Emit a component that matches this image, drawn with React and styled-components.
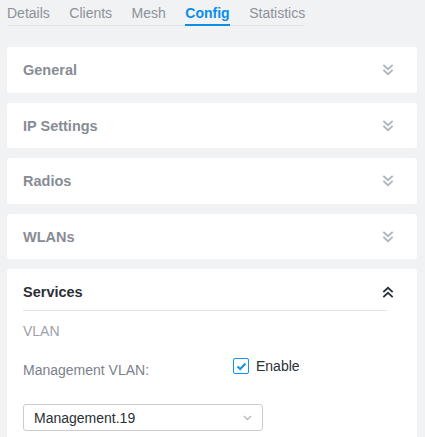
import React, { useState } from "react";
import styled, { createGlobalStyle } from "styled-components";

const Global = createGlobalStyle`
  html, body { margin: 0; padding: 0; background: #f1f2f4; }
  body { font-family: "Liberation Sans", Arial, sans-serif; -webkit-font-smoothing: antialiased; }
  * { box-sizing: border-box; }
`;

const Page = styled.div`
  padding: 0 8px 0 7px;
  width: 425px;
`;

const Tabs = styled.div`
  display: inline-flex;
  gap: 19.5px;
  border-bottom: 1px solid #e3e5e9;
  margin-bottom: 21px;
`;

const Tab = styled.div`
  font-size: 14px;
  line-height: 16px;
  padding: 5px 0 3px;
  border-bottom: 2px solid ${(p) => (p.$active ? "#0a8ee8" : "transparent")};
  color: ${(p) => (p.$active ? "#0a8ee8" : "#8d9199")};
  font-weight: ${(p) => (p.$active ? 700 : 400)};
  margin-bottom: -1px;
`;

const List = styled.div`
  display: flex;
  flex-direction: column;
  gap: 10px;
`;

const Card = styled.div`
  background: #fff;
  border-radius: 3px;
`;

const Header = styled.div`
  display: flex;
  align-items: center;
  justify-content: space-between;
  padding: 15px 23px ${(p) => (p.$open ? "10px" : "14.6px")} 16px;
`;

const Title = styled.div`
  font-size: 14.5px;
  line-height: 16px;
  font-weight: 700;
  color: ${(p) => (p.$open ? "#2b2f36" : "#878c94")};
`;

const Divider = styled.div`
  height: 1px;
  background: #dfe2e6;
  margin: 0 30px 0 16px;
`;

const Body = styled.div`
  padding: 10px 16px 8px;
`;

const Section = styled.div`
  font-size: 14px;
  line-height: 16px;
  color: #9ca1a9;
  margin-top: 2px;
`;

const Row = styled.div`
  display: flex;
  align-items: flex-start;
  margin-top: 19px;
`;

const Label = styled.div`
  width: 210px;
  font-size: 14px;
  line-height: 16px;
  color: #7b818b;
  padding-top: 4px;
`;

const Check = styled.label`
  display: flex;
  align-items: center;
  gap: 7px;
  font-size: 14px;
  line-height: 16px;
  color: #2b2f36;
`;

const Box = styled.span`
  width: 16px;
  height: 16px;
  border: 1px solid #1890f0;
  border-radius: 2px;
  background: #fff;
  display: flex;
  align-items: center;
  justify-content: center;
`;

const Select = styled.div`
  margin-top: 26px;
  width: 240px;
  height: 27px;
  border: 1px solid #c9cdd3;
  border-radius: 3px;
  display: flex;
  align-items: center;
  justify-content: space-between;
  padding: 0 10px 0 10px;
  font-size: 14px;
  color: #2b2f36;
`;

const Chevrons = ({ up, color }) => (
  <svg width="12" height="12" viewBox="0 0 12 12" fill="none" stroke={color} strokeWidth="1.8" strokeLinecap="square">
    {up ? (
      <>
        <polyline points="2,5.5 6,1.8 10,5.5" />
        <polyline points="2,10.5 6,6.8 10,10.5" />
      </>
    ) : (
      <>
        <polyline points="2,1.5 6,5.2 10,1.5" />
        <polyline points="2,6.5 6,10.2 10,6.5" />
      </>
    )}
  </svg>
);

const items = ["General", "IP Settings", "Radios", "WLANs"];

export default function App() {
  const [tab] = useState("Config");
  return (
    <Page>
      <Global />
      <Tabs>
        {["Details", "Clients", "Mesh", "Config", "Statistics"].map((t) => (
          <Tab key={t} $active={t === tab}>{t}</Tab>
        ))}
      </Tabs>
      <List>
        {items.map((t) => (
          <Card key={t}>
            <Header>
              <Title>{t}</Title>
              <Chevrons color="#b0b5bb" />
            </Header>
          </Card>
        ))}
        <Card>
          <Header $open>
            <Title $open>Services</Title>
            <Chevrons up color="#2b2f36" />
          </Header>
          <Divider />
          <Body>
            <Section>VLAN</Section>
            <Row>
              <Label>Management VLAN:</Label>
              <Check>
                <Box>
                  <svg width="11" height="9" viewBox="0 0 11 9" fill="none" stroke="#1890f0" strokeWidth="2">
                    <polyline points="1.5,4.5 4.2,7 9.5,1.5" />
                  </svg>
                </Box>
                Enable
              </Check>
            </Row>
            <Select>
              <span>Management.19</span>
              <svg width="9" height="6" viewBox="0 0 9 6" fill="none" stroke="#b3b8be" strokeWidth="1.3">
                <polyline points="1,1 4.5,4.5 8,1" />
              </svg>
            </Select>
          </Body>
        </Card>
      </List>
    </Page>
  );
}
